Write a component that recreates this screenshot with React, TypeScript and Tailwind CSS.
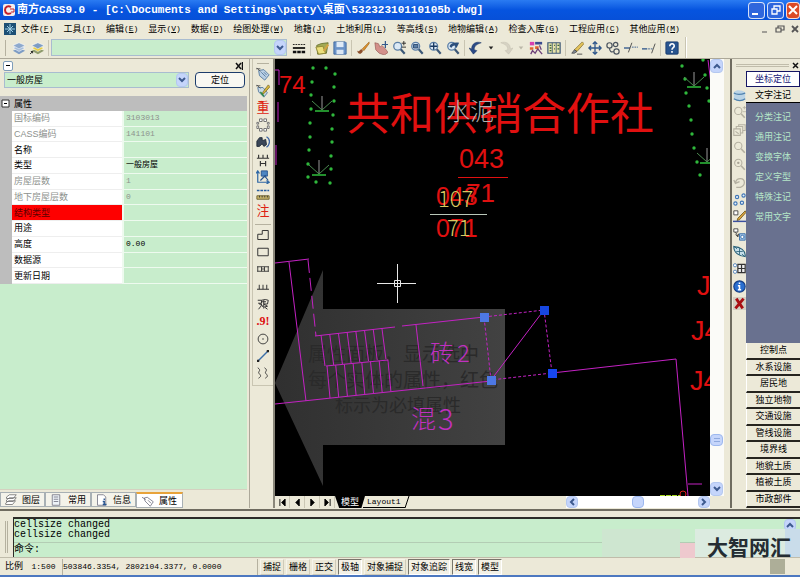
import React from 'react';

const MENUS = [
  ['文件', 'F'],
  ['工具', 'T'],
  ['编辑', 'E'],
  ['显示', 'V'],
  ['数据', 'D'],
  ['绘图处理', 'W'],
  ['地籍', 'J'],
  ['土地利用', 'L'],
  ['等高线', 'S'],
  ['地物编辑', 'A'],
  ['检查入库', 'G'],
  ['工程应用', 'C'],
  ['其他应用', 'M'],
];

const PROPERTIES = [
  { name: '国标编码', value: '3103013', readOnly: true },
  { name: 'CASS编码', value: '141101', readOnly: true },
  { name: '名称', value: '' },
  { name: '类型', value: '一般房屋' },
  { name: '房屋层数', value: '1', readOnly: true },
  { name: '地下房屋层数', value: '0', readOnly: true },
  { name: '结构类型', value: '', required: true },
  { name: '用途', value: '' },
  { name: '高度', value: '0.00' },
  { name: '数据源', value: '' },
  { name: '更新日期', value: '' },
];

const NOTE_ITEMS = ['分类注记', '通用注记', '变换字体', '定义字型', '特殊注记', '常用文字'];

const CATEGORIES = [
  '控制点',
  '水系设施',
  '居民地',
  '独立地物',
  '交通设施',
  '管线设施',
  '境界线',
  '地貌土质',
  '植被土质',
  '市政部件',
];

const STATUS_TOGGLES = [
  { label: '捕捉', on: false },
  { label: '栅格', on: false },
  { label: '正交', on: false },
  { label: '极轴', on: true },
  { label: '对象捕捉', on: false },
  { label: '对象追踪', on: true },
  { label: '线宽', on: true },
  { label: '模型', on: true },
];

const lens = (
  <>
    <circle cx="6.500" cy="6" r="4.500" fill="#dce9f5" stroke="#5b7fa6" strokeWidth="1.500" />
    <path d="M10 9.500l4.500 5" stroke="#3c5877" strokeWidth="2.500" />
  </>
);

const ghostLens = (
  <>
    <circle cx="6.500" cy="6" r="4.500" fill="none" stroke="#b5b1a2" strokeWidth="1.300" />
    <path d="M10 9.500l4.500 5" stroke="#b5b1a2" strokeWidth="2" />
  </>
);

const ICONS: Record<string, React.ReactNode> = {
  layers: (
    <>
      <path d="M1 11l7-3 7 3-7 4z" fill="#7d9cc4" />
      <path d="M1 8l7-3 7 3-7 4z" fill="#a9bfdb" stroke="#fff" strokeWidth=".6" />
      <path d="M1 5l7-3 7 3-7 4z" fill="#8ea9cd" stroke="#fff" strokeWidth=".6" />
    </>
  ),
  layersPrev: (
    <>
      <path d="M2 11l7-3 7 3-7 4z" fill="#8d9a6b" />
      <path d="M2 8l7-3 7 3-7 4z" fill="#e8cf45" stroke="#fff" strokeWidth=".6" />
      <path d="M2 5l7-3 7 3-7 4z" fill="#7d9cc4" stroke="#fff" strokeWidth=".6" />
      <path d="M0 15l3-3M1 12h2v2" stroke="#111" fill="none" />
    </>
  ),
  lineweight: (
    <>
      <path d="M1 4h14" stroke="#111" strokeDasharray="2 1" />
      <path d="M1 8h14" stroke="#111" strokeWidth="2" />
      <path d="M1 12.500h14" stroke="#111" strokeWidth="3" strokeDasharray="4 1" />
    </>
  ),
  open: (
    <>
      <path d="M2 5l5-2 8-1-2 12-10 1z" fill="#a3aa55" stroke="#66702b" />
      <path d="M1 7l8-1 3 8-8 1z" fill="#ece07c" stroke="#8d8532" />
      <path d="M9 11l5-8 2 2-5 7z" fill="#d2a344" />
    </>
  ),
  save: (
    <>
      <path d="M1 1h13l1 1v13H1z" fill="#6b93c8" stroke="#3c659c" />
      <path d="M4 1h8v6H4z" fill="#dfeaf6" />
      <path d="M4 10h8v5H4z" fill="#dbe6f2" />
    </>
  ),
  brush: (
    <>
      <path d="M15 1L7 9l2 2 6-8z" fill="#d9902f" stroke="#915a14" strokeWidth=".6" />
      <path d="M1 10c1 3 2 2 5-1l2 2c-2 5-6 5-7-1z" fill="#8c4f2b" />
    </>
  ),
  pan: (
    <>
      <path d="M1 2l4 1 2 4 2-2 2 2 2 2 3 4-4 3-6-2-4-4z" fill="#d3908a" stroke="#8f524e" strokeWidth=".7" />
      <path d="M13 0v8M9 4h7" stroke="#345a8c" strokeWidth="1.400" />
    </>
  ),
  zoomRt: (
    <>
      {lens}
      <path d="M13.500 0v5M11 2.500h5M11 7h5" stroke="#222" />
    </>
  ),
  zoomWin: (
    <>
      {lens}
      <path d="M4 4h5v4H4z" fill="#5b7fa6" stroke="#28456b" />
    </>
  ),
  zoomExt: (
    <>
      {lens}
      <path d="M6.500 2v8M2.500 6h8" stroke="#17375f" strokeWidth="1.500" />
    </>
  ),
  zoomPrev: (
    <>
      {lens}
      <path d="M4 6c1-3 5-5 11-4l-3 6-2-3c-2 0-3 1-4 3z" fill="#2c4f7c" />
    </>
  ),
  undo: (
    <path d="M0 8l5 7 4-4-3-1c0-4 2-6 8-8C8 0 3 3 3 9z" fill="#2b4a86" stroke="#1d3765" strokeWidth=".6" />
  ),
  redo: (
    <path d="M16 8l-5 7-4-4 3-1c0-4-2-6-8-8 6-2 11 1 11 7z" fill="#d6d2c3" stroke="#c4c0b0" strokeWidth=".6" />
  ),
  caret: <path d="M5 6h6l-3 4z" fill="#222" />,
  caretOff: <path d="M5 6h6l-3 4z" fill="#bbb7a8" />,
  palette: (
    <>
      <path d="M1 1h5v4H1z" fill="#d93fb0" />
      <path d="M7 1h8v3H7z" fill="#3a4a8f" />
      <path d="M1 7h4v3H1zM7 6h4v3H7z" fill="#e1632f" />
      <path d="M2 15l2-4 3 3 3-5 5 6M12 5l2 5" stroke="#6c3f79" strokeWidth="1.500" fill="none" />
    </>
  ),
  book: (
    <>
      <path d="M1 2h14v12H1z" fill="#e7e3a8" stroke="#3f5a78" strokeWidth="1.400" />
      <path d="M6 2v12M10.500 2v12" stroke="#3f5a78" />
      <path d="M3 5h2M3 8h2M8 5h1M8 9h1M12 5h2M12 9h2M3 11h2" stroke="#39653b" strokeWidth="1.500" />
    </>
  ),
  pencil: (
    <>
      <path d="M14 1l2 2-8 9-3-2z" fill="#e3c25a" stroke="#6d5a20" strokeWidth=".7" />
      <path d="M5 10l3 2-3 2H2z" fill="#7f8894" stroke="#333" strokeWidth=".7" />
      <path d="M8 15h6" stroke="#444" />
    </>
  ),
  move: (
    <path
      d="M8 1v14M1 8h14M5.500 3.500L8 1l2.500 2.500M5.500 12.500L8 15l2.500-2.500M3.500 5.500L1 8l2.500 2.500M12.500 5.500L15 8l-2.500 2.500"
      fill="none"
      stroke="#2d558b"
      strokeWidth="1.500"
    />
  ),
  copy: (
    <g fill="none" stroke="#4c5560" strokeWidth="1.400">
      <circle cx="4" cy="5" r="3" />
      <circle cx="11" cy="4" r="2.500" />
      <circle cx="12" cy="12" r="3" />
      <path d="M4 8c0 4 2 5 5 4" />
    </g>
  ),
  trim: (
    <>
      <path d="M0 8h7" stroke="#2d558b" strokeWidth="1.500" />
      <path d="M9 7h7" stroke="#2d558b" strokeDasharray="2 1" />
      <path d="M5 13l4-11" stroke="#444" />
    </>
  ),
  extend: (
    <>
      <path d="M0 9h6" stroke="#2d558b" strokeWidth="1.500" />
      <path d="M7 9h5" stroke="#2d558b" strokeDasharray="2 1" />
      <path d="M11 14l4-11" stroke="#444" />
    </>
  ),
  help: (
    <>
      <rect x="1" y="1" width="14" height="14" rx="1" fill="#27548f" stroke="#16386a" />
      <path d="M5.500 6c0-4 5.500-3.500 5 0-.3 1.600-2.500 1.500-2.500 4M8 11.500v2" fill="none" stroke="#fff" strokeWidth="1.800" />
    </>
  ),
  tag: (
    <>
      <path d="M3 4l6-1 6 6-5 6-6-5z" fill="#b9cfe4" stroke="#54789d" />
      <path d="M6 6l5 5M9 6l3 3" stroke="#54789d" />
      <path d="M0 2h5M1 1l4 4" stroke="#555" />
    </>
  ),
  tagEdit: (
    <>
      <path d="M2 4h6l5 6-4 5-6-6z" fill="#c9d9e6" stroke="#54789d" />
      <path d="M0 2h5M1 1l4 4" stroke="#555" />
      <path d="M14 1l2 2-7 8-2 1 1-3z" fill="#d9b83d" stroke="#5d4d14" strokeWidth=".7" />
      <path d="M5 9l4 5" stroke="#2c8a40" strokeWidth="1.600" />
    </>
  ),
  ring: (
    <g fill="#fff" stroke="#666">
      <path d="M4 1h3v3H4zM9 1h3v3H9zM1 5h2v2H1zM13 5h2v2h-2zM1 9h2v3H1zM13 9h2v3h-2zM4 12h3v3H4zM9 12h3v3H9z" />
    </g>
  ),
  binocular: (
    <>
      <path d="M1 7l3-4h3v3h2l2-1 1 6-3 2-2-3-3 3H1z" fill="#3a4658" stroke="#1d2735" />
      <path d="M12 2c5 3 4 9 0 12" fill="none" stroke="#3d65a5" strokeWidth="1.500" />
    </>
  ),
  fence: <path d="M1 6h14M3 2v4M8 2v4M13 2v4M5 9v6M11 9v6M5 12h6" stroke="#333" strokeWidth="1.300" />,
  survey: (
    <>
      <path d="M2 2v12h13M0 4l2-3 2 3M12 12l3 2-3 2" fill="none" stroke="#2d66a5" strokeWidth="1.400" />
      <path d="M6 1h7v6H6z" fill="#4e86c2" stroke="#24508c" />
      <path d="M5 12l6-6M10 7l4 5" stroke="#24508c" strokeWidth="1.300" />
    </>
  ),
  ruler: (
    <>
      <path d="M1 4h14" stroke="#275d9e" strokeWidth="1.600" strokeDasharray="3 1" />
      <path d="M1 10h14v4H1z" fill="#c5b36a" stroke="#6d5f2a" />
      <path d="M4 10v2M7 10v2M10 10v2M13 10v2" stroke="#333" />
    </>
  ),
  lshape: <path d="M1 14V7h6V2h8v12z" fill="none" stroke="#333" strokeWidth="1.300" />,
  rect: <path d="M1 3h14v10H1z" fill="none" stroke="#333" strokeWidth="1.300" />,
  hshape: <path d="M0 5h16M0 11h16M1 5v6M6 5v6M10 5v6M15 5v6M6 8h4" fill="none" stroke="#333" strokeWidth="1.200" />,
  comb: <path d="M0 11h16M3 5v6M8 5v6M13 5v6" stroke="#333" strokeWidth="1.300" />,
  tree: (
    <path
      d="M1 3h5v4H2l4 3-4 5M6 3l5-1 4 1-1 5H9l5 3-4 1 4 3M9 3v11M5 7l3 5M6 5h6"
      fill="none"
      stroke="#333"
      strokeWidth="1.300"
    />
  ),
  circle: (
    <>
      <circle cx="8" cy="8" r="6.500" fill="none" stroke="#333" strokeWidth="1.200" />
      <circle cx="8" cy="8" r="1" fill="#333" />
    </>
  ),
  segment: (
    <>
      <path d="M2 14L14 2" stroke="#3a6ea8" strokeWidth="2" />
      <path d="M0 13h3v3H0zM13 0h3v3h-3z" fill="#222" />
    </>
  ),
  waves: (
    <path d="M1 1c6 4-1 5 2 8s2 4-1 6M10 1c6 4-1 5 2 8s2 4-1 6" fill="none" stroke="#333" strokeWidth="1.200" />
  ),
  globe: (
    <>
      <path d="M1 4c4-4 10-2 14 0v9c-4 3-10 2-14-1z" fill="#b9d3e6" />
      <path d="M1 5c5 3 9 2 14 0M1 12c5 3 10 3 14 0" fill="none" stroke="#4f82ae" strokeWidth="1.500" />
    </>
  ),
  ghostZoomRt: (
    <>
      {ghostLens}
      <path d="M12 2h4M14 0v4M12 7h4" stroke="#b5b1a2" />
    </>
  ),
  ghostSheets: (
    <path d="M1 6h8v8H1zM4 6V3h8v8H9M7 3V1h8v7h-3M3 9l4 3" fill="none" stroke="#b5b1a2" strokeWidth="1.300" />
  ),
  ghostZoom: ghostLens,
  ghostZoomDot: (
    <>
      {ghostLens}
      <path d="M5 6h3M6.500 4.500v3" stroke="#a5a192" strokeWidth="1.300" />
    </>
  ),
  ghostUndo: <path d="M3 8c2-7 11-6 11 0 0 3-2 5-5 6H4M1 5l2 4 5-2" fill="none" stroke="#b5b1a2" strokeWidth="1.600" />,
  nodes: (
    <g fill="#e8f1fa" stroke="#3f76b6" strokeWidth="1.400">
      <circle cx="5" cy="5" r="2" />
      <circle cx="13" cy="3" r="2" />
      <circle cx="3" cy="13" r="2" />
      <circle cx="11" cy="12" r="2" />
    </g>
  ),
  nodeEdit: (
    <>
      <path d="M1 1h5v5H1z" fill="#fff" stroke="#333" />
      <path d="M15 1l1 2-8 9-3 1 1-3z" fill="#d9a33d" stroke="#5d4d14" strokeWidth=".9" />
      <path d="M0 14h16" stroke="#3a4fa0" strokeWidth="1.800" />
    </>
  ),
  nodeLink: (
    <>
      <path d="M1 1h5v4H1z" fill="#fff" stroke="#333" />
      <path d="M3 5l3 5M3 8l3 3 1-4" stroke="#333" fill="none" />
      <path d="M8 7h7v8H8z" fill="#9cc1e6" stroke="#2d66a5" />
      <circle cx="11.500" cy="11" r="2" fill="#fff" stroke="#2d66a5" />
    </>
  ),
  ellipse: (
    <>
      <path d="M1 2c8 0 15 5 14 12C7 14 1 9 1 2z" fill="#c7e0ea" stroke="#286078" strokeWidth="1.300" />
      <path d="M8 4v8M4 8h8M1 1l4 4M11 11l4 4" stroke="#286078" />
    </>
  ),
  gridLink: (
    <>
      <path d="M6 3h9v10H6zM6 8h9M10.500 3v10" fill="#eee" stroke="#333" strokeWidth="1.500" />
      <circle cx="2.500" cy="4" r="2" fill="#fff" stroke="#3f76b6" />
      <circle cx="2.500" cy="12" r="2" fill="#fff" stroke="#3f76b6" />
    </>
  ),
  info: (
    <>
      <circle cx="8" cy="8" r="7" fill="#2a6fd0" stroke="#153f87" strokeWidth="1.400" />
      <path d="M8 3v2M6 7h2v5M6 12h4" fill="none" stroke="#fff" strokeWidth="1.900" />
    </>
  ),
  remove: (
    <>
      <path d="M0 0h16v16H0z" fill="#d2cec2" />
      <path d="M4 2l8 12M13 2L3 14" stroke="#a90e12" strokeWidth="3.500" />
    </>
  ),
  sheetStack: (
    <g fill="#fff" stroke="#666">
      <path d="M1 12l4-3h9l-4 5H1zM2 8l4-3h9l-4 5H2zM2 4l4-3h9l-4 5H2z" />
    </g>
  ),
  page: <path d="M3 1h10v14H3zM5 4h6M5 7h6M5 10h6" fill="#eef3f8" stroke="#667" />,
  pageInfo: (
    <>
      <path d="M2 1h8l3 3v11H2z" fill="#fff" stroke="#667" />
      <path d="M11 6v2M9 10h2v4M9 14h5" fill="none" stroke="#27548f" strokeWidth="1.800" />
    </>
  ),
  label: <path d="M3 4l4-1 8 6-4 6-7-7zM0 3l5 3M8 7l4 4" fill="#fff" stroke="#667" />,
};

const Icon = ({ name, className = 'size-3.5' }: { name: string; className?: string }) => (
  <svg viewBox="0 0 16 16" className={`${className} shrink-0`} aria-hidden="true">
    {ICONS[name]}
  </svg>
);

const ToolButton = ({ name, narrow = false }: { name: string; narrow?: boolean }) => (
  <button
    aria-label={name}
    className={`flex h-5 shrink-0 items-center justify-center ${narrow ? 'w-3' : 'w-[18px]'}`}
  >
    <Icon name={name} className={narrow ? 'size-3' : 'size-3.5'} />
  </button>
);

const Separator = () => <span className="mx-0.5 h-4 w-px shrink-0 bg-[#c9c5b2]" />;

const Chevron = ({ d, className }: { d: string; className: string }) => (
  <span
    className={`flex shrink-0 items-center justify-center rounded-sm border border-[#b4c8f0] bg-[#c5d5fb] ${className}`}
  >
    <svg viewBox="0 0 8 8" className="size-2" fill="none" stroke="#3d5a8f" strokeWidth="2">
      <path d={d} />
    </svg>
  </span>
);

const UP = 'M1 6l3-3 3 3';
const DOWN = 'M1 2l3 3 3-3';
const LEFT = 'M6 1L3 4l3 3';
const RIGHT = 'M2 1l3 3-3 3';

const TitleBar = () => (
  <header className="flex h-5 shrink-0 items-center bg-linear-to-b from-[#2a7bf2] via-[#0654df] to-[#0750d8] pl-[3px] text-white">
    <svg viewBox="0 0 12 12" className="mr-0.5 size-3" aria-hidden="true">
      <rect width="12" height="12" rx="2" fill="#f5efef" />
      <path d="M8 3C5 1 2 3 2 6s3 5 6 3" fill="none" stroke="#c3202a" strokeWidth="2" />
      <path d="M7 5h4v3H8" fill="none" stroke="#c3202a" />
    </svg>
    <h1 className="flex-1 truncate font-['Liberation_Mono','Noto_Sans_CJK_SC',monospace] text-[11px] leading-5 font-bold">
      {'南方CASS9.0 - [C:\\Documents and Settings\\patty\\桌面\\53232310110105b.dwg]'}
    </h1>
    <div className="flex gap-0.5">
      <button aria-label="最小化" className="flex size-[17px] items-end rounded-sm border border-white/80 bg-[#2f66dc] p-[3px]">
        <span className="h-0.5 w-1.5 bg-white" />
      </button>
      <button aria-label="还原" className="flex size-[17px] items-center justify-center rounded-sm border border-white/80 bg-[#2f66dc]">
        <svg viewBox="0 0 10 10" className="size-2.5" fill="none" stroke="#fff" strokeWidth="1.300">
          <path d="M1 4h5v5H1zM3 4V1h6v5H6" />
        </svg>
      </button>
      <button aria-label="关闭" className="flex h-[17px] w-3.5 items-center justify-center rounded-sm border border-white/80 bg-[#dc4a26]">
        <svg viewBox="0 0 10 10" className="size-2.5" stroke="#fff" strokeWidth="2">
          <path d="M1 1l8 8M9 1L1 9" />
        </svg>
      </button>
    </div>
  </header>
);

const MenuBar = () => (
  <nav className="flex h-[17px] shrink-0 items-center bg-[#ece9d8] pl-1">
    <svg viewBox="0 0 12 12" className="mr-[5px] size-3 shrink-0" aria-hidden="true">
      <rect width="12" height="12" fill="#1d5076" />
      <path d="M6 1v10M1 6h10M3 3l6 6M9 3L3 9" stroke="#9fd0e8" />
    </svg>
    <ul className="flex flex-1 gap-2.5">
      {MENUS.map(([label, key]) => (
        <li key={key}>
          <button className="flex items-center whitespace-nowrap">
            {label}
            <span className="font-['Liberation_Mono',monospace] text-[8px]">
              (<u>{key}</u>)
            </span>
          </button>
        </li>
      ))}
    </ul>
    <svg viewBox="0 0 40 10" className="h-2.5 w-10 shrink-0" fill="none" stroke="#555" strokeWidth="1.200">
      <path d="M2 8h5M16 4h5v4h-5zM18 4V2h6v4h-3" />
      <path d="M32 2l6 6M38 2l-6 6" strokeWidth="1.800" />
    </svg>
  </nav>
);

const Toolbar = () => (
  <div className="flex h-[22px] shrink-0 items-center border-b border-[#aca899] bg-[#ece9d8]">
    <span className="mr-1 ml-[5px] h-4 w-px bg-[#b5b19f]" />
    <ToolButton name="layers" />
    <ToolButton name="layersPrev" />
    <Separator />
    <div className="mr-[3px] flex h-[17px] w-[236px] items-center border border-[#a9bcd0] bg-[#c8edcc]">
      <select aria-label="图层" className="h-full flex-1 appearance-none">
        <option></option>
      </select>
      <Chevron d={DOWN} className="h-full w-3" />
    </div>
    <ToolButton name="lineweight" />
    <Separator />
    <ToolButton name="open" />
    <ToolButton name="save" />
    <Separator />
    <ToolButton name="brush" />
    <ToolButton name="pan" />
    <ToolButton name="zoomRt" />
    <ToolButton name="zoomWin" />
    <ToolButton name="zoomExt" />
    <ToolButton name="zoomPrev" />
    <Separator />
    <ToolButton name="undo" />
    <ToolButton name="caret" narrow />
    <ToolButton name="redo" />
    <ToolButton name="caretOff" narrow />
    <ToolButton name="palette" />
    <ToolButton name="book" />
    <Separator />
    <ToolButton name="pencil" />
    <ToolButton name="move" />
    <ToolButton name="copy" />
    <ToolButton name="trim" />
    <ToolButton name="extend" />
    <Separator />
    <ToolButton name="help" />
    <span className="ml-1 h-full w-0.5 border-l border-[#c9c5b2] bg-white" />
  </div>
);

const PropertyPanel = () => (
  <aside className="flex w-[250px] shrink-0 flex-col border-r border-[#aca899]">
    <div className="flex h-[13px] items-center justify-between pr-1.5 pl-[3px]">
      <button aria-label="折叠" className="flex size-2.5 items-center justify-center rounded-xs border border-[#7f9db9] bg-white">
        <span className="h-px w-1 bg-black" />
      </button>
      <button aria-label="关闭面板" className="flex">
        <svg viewBox="0 0 8 8" className="size-2" stroke="#111" strokeWidth="1.500">
          <path d="M1 1l5 6M6 1L1 7M7.500 0v8" />
        </svg>
      </button>
    </div>
    <div className="flex h-4 gap-1.5 pr-1 pl-1">
      <div className="flex flex-1 border border-[#a9bcd0] bg-[#c8edcc]">
        <select aria-label="地物类型" className="h-full flex-1 appearance-none pl-0.5 leading-3">
          <option>一般房屋</option>
        </select>
        <Chevron d={DOWN} className="h-full w-3" />
      </div>
      <button className="w-[50px] rounded-sm border border-[#1c3c6c] bg-[#f8f7f2] leading-3">定位</button>
    </div>
    <div className="mt-2 mr-0.5 flex flex-1 flex-col border-b border-[#d5d1c0] bg-[#c8edcc]">
      <table className="h-[188px] w-full table-fixed border-collapse">
        <colgroup>
          <col className="w-3" />
          <col className="w-[111px]" />
          <col />
        </colgroup>
        <thead>
          <tr className="h-[15px] bg-[#bdbdbd]">
            <th className="pl-px">
              <svg viewBox="0 0 9 9" className="size-[9px]">
                <path d="M1 1h7v7H1z" fill="#fff" stroke="#333" />
                <path d="M3 4h3v1H3z" fill="#000" />
              </svg>
            </th>
            <th colSpan={2} className="pl-0.5 text-left leading-3 font-normal">
              属性
            </th>
          </tr>
        </thead>
        <tbody>
          {PROPERTIES.map((p) => (
            <tr key={p.name} className={p.readOnly ? 'text-[#8d918d]' : 'text-black'}>
              <td className="bg-[#bdbdbd]" />
              <td
                className={`border-b border-[#eee] pl-0.5 leading-3 whitespace-nowrap ${
                  p.required ? 'bg-[#fe0000] text-[#5c0000]' : 'bg-white'
                }`}
              >
                {p.name}
              </td>
              <td className="border-b border-l-2 border-[#eefaef] bg-[#c8edcc] pl-0.5 font-['Liberation_Mono','Noto_Sans_CJK_SC',monospace] text-[8px] leading-3">
                {p.value}
              </td>
            </tr>
          ))}
        </tbody>
      </table>
    </div>
    <div className="mt-0.5 flex h-4 items-start">
      {[
        ['sheetStack', '图层', 'w-[45px]'],
        ['page', '常用', 'w-[46px]'],
        ['pageInfo', '信息', 'w-[45px]'],
      ].map(([icon, label, width]) => (
        <button
          key={label}
          className={`${width} flex h-[15px] items-center justify-between border border-[#a8b0b4] bg-[#f4f3ea] pr-1 pl-1`}
        >
          <Icon name={icon} className="size-3" />
          {label}
        </button>
      ))}
      <button className="flex h-4 w-[47px] items-center justify-between border border-t-2 border-[#a8b0b4] border-t-[#e8a33a] bg-white px-[5px]">
        <Icon name="label" className="size-3" />
        属性
      </button>
    </div>
  </aside>
);

const SideTools = () => (
  <div className="w-[25px] shrink-0 border-r-2 border-[#8a877a] pl-0.5">
    <div className="border-b border-l border-[#c9c5b2] pt-1">
      <div className="mx-1 h-px bg-[#b5b19f]" />
      <div className="grid h-[156px] grid-rows-9 place-items-center pt-px">
        <Icon name="tag" />
        <Icon name="tagEdit" />
        <span className="text-[13px] leading-4 text-[#dd2211]">重</span>
        <Icon name="ring" />
        <Icon name="binocular" />
        <Icon name="fence" />
        <Icon name="survey" />
        <Icon name="ruler" />
        <span className="text-[13px] leading-4 text-[#dd2211]">注</span>
      </div>
      <div className="mx-0.5 mt-1 h-px bg-[#b5b19f]" />
      <div className="grid h-[160px] grid-rows-9 place-items-center pt-px pb-[3px]">
        <Icon name="lshape" className="size-3" />
        <Icon name="rect" className="size-3" />
        <Icon name="hshape" className="size-3" />
        <Icon name="comb" className="size-3" />
        <Icon name="tree" className="size-3" />
        <span className="font-['Liberation_Serif',serif] text-[12px] leading-4 font-bold text-[#dd1111]">.9!</span>
        <Icon name="circle" className="size-3" />
        <Icon name="segment" className="size-3" />
        <Icon name="waves" className="size-3" />
      </div>
    </div>
  </div>
);

const DOTS = [
  [313, 68], [326, 68], [335, 74], [312, 82], [334, 87], [311, 95], [334, 101], [311, 109],
  [333, 115], [310, 123], [332, 129], [310, 137], [332, 142], [309, 150], [331, 156], [308, 164],
  [331, 169], [308, 177], [316, 182], [330, 183], [682, 66], [685, 79], [686, 93], [689, 106],
  [691, 120], [692, 134], [694, 148], [697, 162], [700, 175], [703, 60], [705, 75], [707, 88], [709, 101],
];

const GRASS = [[322, 110], [319, 174], [694, 86], [707, 162]];

const GRIPS = [
  [484, 317, '#4d78e4'],
  [544, 310, '#1747e0'],
  [552, 373, '#1747f0'],
  [491, 380, '#4d78e4'],
] as const;

const Drawing = () => (
  <svg className="block h-0 w-full flex-1 bg-black" aria-label="地形图">
    <defs>
      <linearGradient id="arrow" x1="0" x2="1">
        <stop offset="0" stopColor="#303030" />
        <stop offset="1" stopColor="#424242" />
      </linearGradient>
    </defs>
    <g transform="translate(-275 -59)" fontFamily="'Liberation Sans','Noto Sans CJK SC',sans-serif">
      <path d="M275 383L323 270V309H505V445H323V486z" fill="url(#arrow)" />
      <g fill="#2a2a2a" fontFamily="'Noto Sans CJK SC',sans-serif" fontSize="19">
        <text x="308" y="361">属性面板，显示选中</text>
        <text x="308" y="387">每个实体的属性，红色</text>
        <text x="335" y="412" fontSize="18">标示为必填属性</text>
      </g>

      {DOTS.map(([x, y]) => (
        <circle key={`${x}-${y}`} cx={x} cy={y} r="1.700" fill="#2fb83c" />
      ))}
      {GRASS.map(([x, y]) => (
        <g key={`${x}-${y}`} fill="none">
          <path d={`M${x} ${y - 14}V${y}`} stroke="#999" />
          <path d={`M${x - 10} ${y - 9}L${x} ${y}L${x + 10} ${y - 9}`} stroke="#4b8a50" />
          <path d={`M${x - 7} ${y + 1}H${x + 7}`} stroke="#2fc03c" strokeWidth="1.500" />
        </g>
      ))}

      <g fill="none" stroke="#c322c3">
        <path d="M275 70h4v15M278 102v20M276 145v20M708 60l3 24" />
        <path d="M275 263L309 259M289 262L306 401M275 404L491 381M315 336L395 327M402 326L484 317" />
        <path d="M308 260L316 336" strokeDasharray="13 5" />
        <path d="M326 366L388 360M416 325L423 386" />
        {[0, 1, 2, 3, 4, 5, 6, 7].map((i) => (
          <path
            key={i}
            d={`M${321 + i * 8.7} ${335 - i}l4 31M${327 + i * 8.7} ${366 - i * 0.9}l3 32`}
          />
        ))}
        <path d="M491 380L544 310M552 373L676 359L688 496M688 484H702" />
        <path d="M484 317L544 310L552 373L491 380z" strokeDasharray="3 2" />
      </g>
      <path d="M660 496H680" stroke="#a6d820" strokeWidth="2" strokeDasharray="5 1" />
      <circle cx="683" cy="494" r="3" fill="none" stroke="#e02020" />

      <g fill="#c030c0" fontFamily="'Noto Sans CJK SC',sans-serif" fontWeight="300">
        <text x="430" y="362" fontSize="24">砖</text>
        <text x="457" y="362" fontSize="24">2</text>
        <text x="411" y="428" fontSize="25">混</text>
        <text x="438" y="430" fontSize="29">3</text>
      </g>

      <g fill="#e01010">
        <text x="346" y="130" fontSize="44">共和供销合作社</text>
        <text x="279" y="93" fontSize="24">74</text>
        <text x="459" y="168" fontSize="27">043</text>
        <text x="466" y="202" fontSize="26">71</text>
        <text x="436" y="205" fontSize="25">043</text>
        <text x="436" y="237" fontSize="25">071</text>
        <text x="697" y="295" fontSize="27">J</text>
        <text x="691" y="340" fontSize="27">J4</text>
        <text x="690" y="390" fontSize="27">J4</text>
        <path d="M458 177.500H508" stroke="#e01010" />
      </g>
      <g fontFamily="'Noto Sans CJK SC',sans-serif" fontWeight="300">
        <text x="446" y="120" fontSize="24" fill="#b0b0b0">水泥</text>
        <text x="438" y="207" fontSize="22" fill="#d8c860">107</text>
        <text x="447" y="236" fontSize="22" fill="#d8c860">71</text>
      </g>
      <path d="M430 214.500H487" stroke="#b9c7b9" />

      {GRIPS.map(([x, y, fill]) => (
        <rect key={x} x={x - 4} y={y - 4} width="9" height="9" fill={fill} />
      ))}
      <path d="M397.500 264V303M377 283.500H416M394.500 280.500h6v6h-6z" fill="none" stroke="#e8e8e8" />
    </g>
  </svg>
);

const LayoutTabs = () => (
  <div className="flex h-3 shrink-0 items-center bg-[#ece9d8]">
    {['M1 0v8M7 0L3 4l4 4z', 'M6 0L2 4l4 4z', 'M2 0l4 4-4 4z', 'M1 0l4 4-4 4zM7 0v8'].map((d) => (
      <button key={d} aria-label="切换布局" className="flex h-3 w-[15px] items-center justify-center border-r border-[#cbc7b5]">
        <svg viewBox="0 0 8 8" className="size-[7px]" fill="#000" stroke="#000">
          <path d={d} />
        </svg>
      </button>
    ))}
    <button className="h-3 bg-black px-1.5 leading-3 text-white [clip-path:polygon(0_0,100%_0,88%_100%,14%_100%)]">模型</button>
    <button className="-ml-0.5 h-3 border-b border-black px-1 font-['Liberation_Mono',monospace] text-[8px] leading-3">
      Layout1
    </button>
    <svg viewBox="0 0 5 12" className="h-3 w-[5px]" stroke="#000">
      <path d="M0 12L4 0" />
    </svg>
    <div className="ml-auto flex h-3 w-[144px] items-center justify-between bg-white">
      <Chevron d={LEFT} className="h-3 w-3" />
      <span className="h-3 w-3 rounded-sm border border-[#9db8ef] bg-[#c5d5fb]" />
      <Chevron d={RIGHT} className="h-3 w-3" />
    </div>
  </div>
);

const VerticalScroll = () => (
  <div className="flex w-[14px] shrink-0 flex-col bg-[#fbfbf8]">
    <Chevron d={UP} className="h-3.5 w-[13px]" />
    <span className="mt-auto mb-9 flex h-3 w-[13px] items-center justify-center rounded-sm border border-[#9db8ef] bg-[#c5d5fb]">
      <span className="h-1 w-1.5 border-y border-[#8fa9de]" />
    </span>
    <Chevron d={DOWN} className="h-3.5 w-[13px]" />
    <span className="h-3 bg-[#ece9d8]" />
  </div>
);

const RIGHT_ICONS = [
  'globe', 'ghostZoomRt', 'ghostSheets', 'ghostZoom', 'ghostZoomDot', 'ghostUndo', 'nodes',
  'nodeEdit', 'nodeLink', 'ellipse', 'gridLink', 'info', 'remove',
];

const RightDock = () => (
  <aside className="flex w-[70px] shrink-0 flex-col border-l-2 border-[#6f6c60]">
    <div className="flex h-3 items-center gap-0.5 pl-1">
      <span className="h-[3px] flex-1 border-y border-[#c0bcaa]" />
      <svg viewBox="0 0 9 9" className="size-[9px]" stroke="#111" strokeWidth="1.500">
        <path d="M2 2l5 5M7 2L2 7" />
      </svg>
    </div>
    <div className="flex flex-1">
      <div className="w-[14px] pt-4">
        <div className="grid h-[225px] grid-rows-[repeat(13,1fr)] place-items-center">
          {RIGHT_ICONS.map((name) => (
            <Icon key={name} name={name} className="size-[13px]" />
          ))}
        </div>
      </div>
      <div className="flex flex-1 flex-col">
        <button className="h-4 border border-[#151565] bg-white leading-3 text-[#151575]">坐标定位</button>
        <button className="h-4 border-b border-black leading-4">文字注记</button>
        <ul className="flex flex-1 flex-col bg-[#69718f] pt-1 text-center leading-5 text-[#b5e6c8]">
          {NOTE_ITEMS.map((item) => (
            <li key={item}>
              <button>{item}</button>
            </li>
          ))}
        </ul>
        <div className="grid h-[165px] grid-rows-10">
          {CATEGORIES.map((item) => (
            <button key={item} className="border-b-2 border-l border-[#26241f] border-l-white leading-3">
              {item}
            </button>
          ))}
        </div>
      </div>
    </div>
  </aside>
);

const CommandWindow = () => (
  <section className="relative flex h-12 shrink-0 border-t-2 border-[#6f6c60] pt-1.5">
    <div className="mx-[5px] mt-1 mb-1 w-[3px] border-x border-[#b5b19f]" />
    <div className="flex flex-1 flex-col border-t-2 border-l border-[#2c2c28] bg-[#c8edcc] pt-px font-['Liberation_Mono','Noto_Sans_CJK_SC',monospace] text-[10px] leading-[10px]">
      <p>cellsize changed</p>
      <p>cellsize changed</p>
      <div className="mt-0.5 flex flex-1 items-center border-t border-[#b3cdb4]">
        <label htmlFor="command">命令:</label>
        <input id="command" className="w-0 flex-1 bg-transparent outline-none" />
      </div>
    </div>
    <Chevron d={UP} className="absolute top-2 right-1 h-3 w-3" />
    {/* watermark strip over the lower right corner */}
    <div className="absolute right-0 -bottom-4 flex h-11 items-start" aria-hidden="true">
      <span className="h-7 w-[78px] bg-[#cee6d0]" />
      <span className="mt-[14px] h-[15px] w-[15px] bg-[#eec9ce]" />
      <span className="h-7 w-[90px] bg-[#dcebe0]" />
      <span className="h-7 w-[15px] bg-[#c9dcea]" />
    </div>
    <div className="absolute right-[15px] -bottom-[17px] size-[15px] bg-[#adae98]" />
    <strong className="absolute right-[9px] -bottom-px font-['Noto_Sans_CJK_SC',sans-serif] text-[21px] leading-6 font-bold text-[#252d33]">
      大智网汇
    </strong>
  </section>
);

const StatusBar = () => (
  <footer className="flex h-5 shrink-0 items-center border-t border-b-2 border-t-[#c0bcaa] border-b-[#4c78c0] bg-[#ece9d8]">
    <span className="w-[62px] pl-[5px]">
      比例 <span className="pl-1.5 font-['Liberation_Mono',monospace] text-[8px]">1:500</span>
    </span>
    <output className="h-4 w-[196px] border-x border-[#b5b19f] font-['Liberation_Mono',monospace] text-[8px] leading-4">
      503846.3354, 2802104.3377, 0.0000
    </output>
    <div className="ml-0.5 flex gap-0.5">
      {STATUS_TOGGLES.map((t) => (
        <button
          key={t.label}
          aria-pressed={t.on}
          className={`h-4 border px-[2px] leading-3 ${
            t.on
              ? 'border-[#77756a] border-r-white border-b-white bg-[#f3f1e6]'
              : 'border-[#f6f4ea] border-r-[#cfcbb9] border-b-[#cfcbb9]'
          }`}
        >
          {t.label}
        </button>
      ))}
    </div>
  </footer>
);

export default function App() {
  return (
    <div className="flex min-h-screen w-full flex-col overflow-hidden bg-[#ece9d8] font-['Liberation_Sans','Noto_Sans_CJK_SC',sans-serif] text-[9px] leading-3 text-black">
      <TitleBar />
      <MenuBar />
      <Toolbar />
      <main className="flex flex-1 pb-px">
        <PropertyPanel />
        <SideTools />
        <div className="flex min-w-0 flex-1 flex-col">
          <Drawing />
          <LayoutTabs />
        </div>
        <VerticalScroll />
        <div className="w-1.5 shrink-0" />
        <RightDock />
      </main>
      <CommandWindow />
      <StatusBar />
    </div>
  );
}
